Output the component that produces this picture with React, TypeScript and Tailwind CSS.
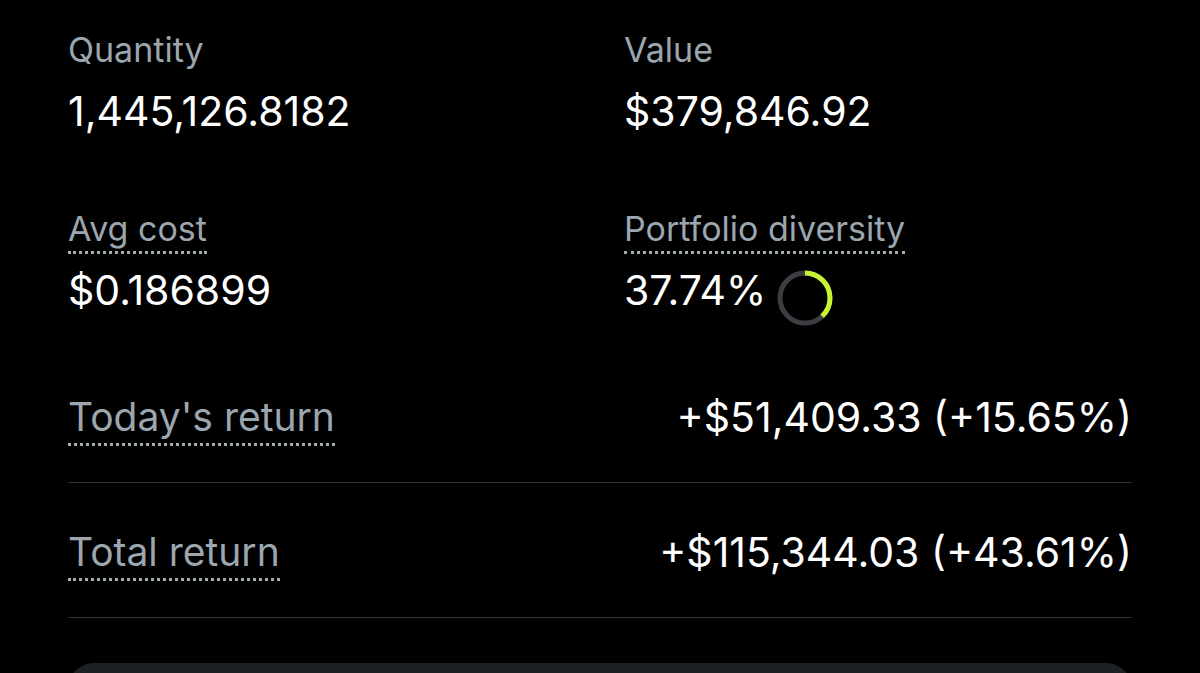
import React from "react";

function Ring({ pct }: { pct: number }) {
  const r = 25;
  const c = 2 * Math.PI * r;
  return (
    <svg width="58" height="58" viewBox="0 0 58 58" className="block shrink-0">
      <circle cx="29" cy="29" r={r} fill="none" stroke="#3b3e42" strokeWidth="5" />
      <circle
        cx="29"
        cy="29"
        r={r}
        fill="none"
        stroke="#c6f432"
        strokeWidth="5"
        strokeDasharray={`${(c * pct) / 100} ${c}`}
        transform="rotate(-90 29 29)"
      />
    </svg>
  );
}

function Label({ children, dotted, big }: { children: React.ReactNode; dotted?: boolean; big?: boolean }) {
  return (
    <span
      className={
        (big ? "text-[39px] pb-[7px] " : "text-[34px] ") +
        "inline-block leading-none text-[#9ba6ae] " +
        (dotted ? "border-b-[3px] border-dotted border-[#a3adb4] " : "") +
        (!big && dotted ? "pb-[5px]" : "")
      }
    >
      {children}
    </span>
  );
}

export default function App() {
  return (
    <div
      className="w-[1200px] h-[673px] overflow-hidden bg-black text-white px-[68px]"
      style={{ fontFamily: "Inter, 'Noto Sans', sans-serif" }}
    >
      <div className="grid grid-cols-[556px_1fr] pt-[33px]">
        <div className="flex flex-col items-start">
          <Label>Quantity</Label>
          <span className="mt-[24px] text-[41px] leading-none">1,445,126.8182</span>
        </div>
        <div className="flex flex-col items-start">
          <Label>Value</Label>
          <span className="mt-[24px] text-[41px] leading-none">$379,846.92</span>
        </div>
      </div>
      <div className="grid grid-cols-[556px_1fr] mt-[80px]">
        <div className="flex flex-col items-start">
          <Label dotted>Avg cost</Label>
          <span className="mt-[16px] text-[41px] leading-none">$0.186899</span>
        </div>
        <div className="flex flex-col items-start">
          <Label dotted>Portfolio diversity</Label>
          <div className="mt-[15px] flex items-start gap-[10px]">
            <span className="text-[41px] leading-none mt-[1px]">37.74%</span>
            <Ring pct={37.74} />
          </div>
        </div>
      </div>
      <div className="mt-[70px] flex items-start justify-between border-b border-[#303235] pb-[36px]">
        <Label dotted big>Today's return</Label>
        <span className="text-[41px] leading-none">+$51,409.33 (+15.65%)</span>
      </div>
      <div className="mt-[49px] flex items-start justify-between border-b border-[#303235] pb-[36px]">
        <Label dotted big>Total return</Label>
        <span className="text-[41px] leading-none">+$115,344.03 (+43.61%)</span>
      </div>
      <div className="mt-[45px] h-[80px] rounded-[26px] bg-[#1e2124]" />
    </div>
  );
}
